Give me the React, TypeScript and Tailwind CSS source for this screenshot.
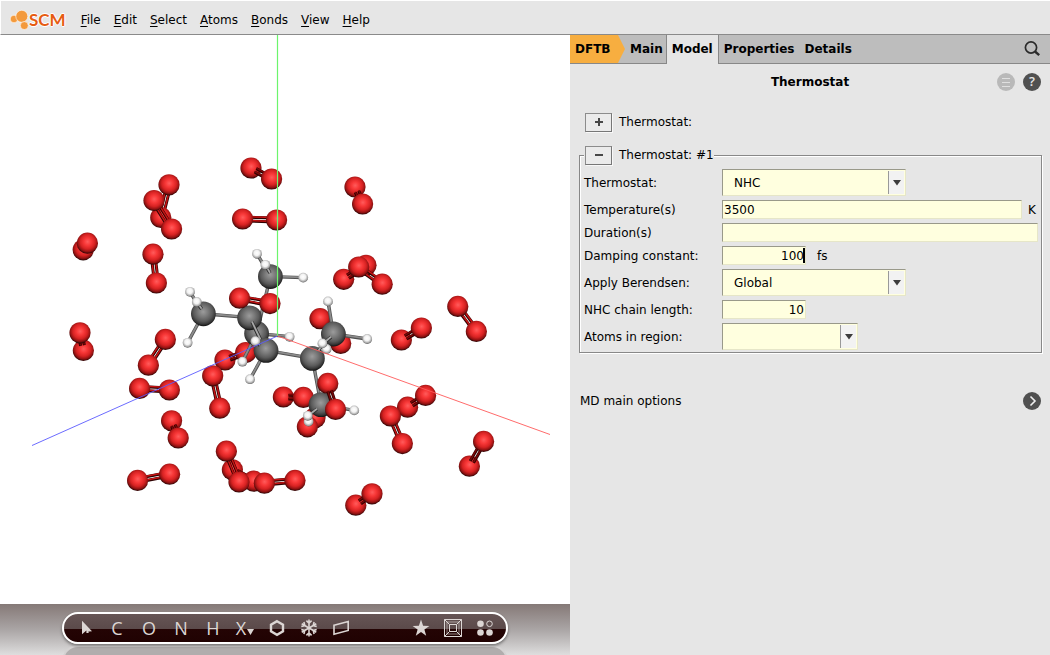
import React from "react";

type Kind = "O" | "C" | "H";
type Bond = [number, number, number, number, number];
type Atom = [Kind, number, number];

interface Group {
  bonds?: Bond[];
  atoms: Atom[];
  fore?: Bond[];
  front?: Atom[];
}

// Two oxygens; in short pairs the bond starts on the face of the first ball and ends behind the second.
function oxygen(x1: number, y1: number, x2: number, y2: number): Group {
  const len = Math.hypot(x2 - x1, y2 - y1);
  if (len > 29) {
    return {
      bonds: [[x1, y1, x2, y2, 2]],
      atoms: [
        ["O", x1, y1],
        ["O", x2, y2],
      ],
    };
  }
  const t = 5 / len;
  return {
    atoms: [["O", x1, y1]],
    fore: len > 12 ? [[x1 + (x2 - x1) * t, y1 + (y2 - y1) * t, x2, y2, 2]] : [],
    front: [["O", x2, y2]],
  };
}

const back: Group[] = [
  oxygen(251, 168, 271.6, 179),
  oxygen(242.6, 219, 276.6, 220),
  oxygen(160.8, 217.5, 169, 184.8),
  oxygen(154, 200.6, 171.6, 229),
  oxygen(83.2, 249.8, 87.4, 243.2),
  oxygen(153, 254.2, 156.4, 283),
  oxygen(83.4, 350.4, 80, 332.8),
  oxygen(165.4, 339.4, 148.4, 365.2),
  oxygen(355, 187, 362.6, 204),
  oxygen(343.7, 279.3, 366, 265.3),
  { bonds: [[358.7, 267, 382.3, 284, 2]], atoms: [["O", 358.7, 267], ["O", 382.2, 284.2]] },
  oxygen(401.4, 340, 421.4, 328),
  oxygen(457.8, 306.4, 476.4, 331.4),
  oxygen(225, 360, 245.7, 352.6),
  oxygen(139.6, 388.4, 169.4, 390),
  oxygen(212.7, 375.8, 219.8, 408.2),
  oxygen(171.6, 420.8, 178.2, 438),
  oxygen(137.6, 480.4, 169.6, 474.2),
  oxygen(232.4, 469.8, 253.7, 481.2),
  oxygen(226.4, 451.2, 239, 482),
  oxygen(295, 480.4, 264.4, 483.2),
  oxygen(355.8, 505.2, 372, 493.8),
  oxygen(407.6, 407.2, 425.6, 395.4),
  oxygen(390.4, 416, 402.4, 443.6),
  oxygen(469.4, 466.2, 483.6, 441.4),
  oxygen(283.4, 397, 303.4, 397.4),
  oxygen(315, 417.7, 307.4, 426.8),
  oxygen(320, 318.7, 340.7, 343.4),
];

const molecule: Group[] = [
  { bonds: [[270.4, 276.6, 256.6, 333.5, 1], [256.6, 333.5, 289.6, 336.6, 1], [256.6, 333.5, 242.4, 361.7, 1]], atoms: [["C", 256.6, 333.5], ["H", 289.6, 336.8], ["H", 242.4, 361.7]] },
  { bonds: [[270.4, 276.6, 257, 253.8, 1], [270.4, 276.6, 303.2, 277.6, 1]], atoms: [["C", 270.4, 276.6], ["H", 257, 253.8], ["H", 303.2, 277.6]], fore: [[270, 273, 265.4, 264.8, 1]], front: [["H", 265.4, 264.8]] },
  { bonds: [[203.4, 313.8, 249.6, 317.6, 1], [203.4, 313.8, 187.6, 342.8, 1], [203.4, 313.8, 190, 291.8, 1]], atoms: [["H", 190, 291.8], ["H", 187.6, 342.8], ["C", 203.4, 313.8]], fore: [[201.6, 309, 196.8, 302, 1]], front: [["H", 196.8, 302]] },
  { bonds: [[249.6, 317.6, 266, 350.4, 1]], atoms: [["C", 249.6, 317.8]], fore: [[252, 322, 262, 343, 1]] },
  oxygen(239.6, 298.2, 270, 303.6),
  { bonds: [[266, 350.4, 312.4, 358.4, 1], [266, 350.4, 250, 379.2, 1]], atoms: [["C", 266, 350.4], ["H", 250, 379.2]], fore: [[260, 345.5, 255.4, 341.2, 1]], front: [["H", 255.4, 341.2]] },
  { bonds: [[333.4, 334, 328, 301.4, 1], [333.4, 334, 367.2, 339, 1]], atoms: [["C", 333.4, 334], ["H", 328, 301.4], ["H", 367.2, 339]] },
  { bonds: [[312.4, 358.4, 321, 404.7, 1]], atoms: [["H", 326.6, 349], ["C", 312.4, 358.4]], fore: [[331, 337, 324, 343, 1], [322.5, 344, 318.5, 351, 1]], front: [["H", 322.4, 343.4]] },
  { bonds: [[321, 404.7, 354.2, 410.4, 1]], atoms: [["C", 321, 404.7], ["H", 354.2, 410.4], ["H", 308.6, 421.6]], fore: [[317, 409, 308, 416, 1]], front: [["H", 307.8, 415.8]] },
  { atoms: [["O", 327.8, 383.4]], fore: [[329.6, 391, 335.6, 409.4, 2]], front: [["O", 335.6, 409.4]] },
];

const radius: Record<Kind, number> = { O: 10.6, C: 12.4, H: 4.9 };

function BondLine({ bond, pale }: { bond: Bond; pale?: boolean }) {
  const [x1, y1, x2, y2, order] = bond;
  if (order === 1) {
    return (
      <g>
        <line x1={x1} y1={y1} x2={x2} y2={y2} stroke={pale ? "#2c2c2c" : "#505050"} strokeWidth={3.4} />
        <line x1={x1} y1={y1 - 0.3} x2={x2} y2={y2 - 0.3} stroke={pale ? "#a8a8a8" : "#8c8c8c"} strokeWidth={1.8} />
      </g>
    );
  }
  const len = Math.hypot(x2 - x1, y2 - y1);
  const nx = (-(y2 - y1) / len) * 1.9;
  const ny = ((x2 - x1) / len) * 1.9;
  return (
    <g>
      {[-1, 1].map((s) => (
        <g key={s}>
          <line x1={x1 + nx * s} y1={y1 + ny * s} x2={x2 + nx * s} y2={y2 + ny * s} stroke="#2e0000" strokeWidth={3} />
          <line x1={x1 + nx * s} y1={y1 + ny * s - 0.5} x2={x2 + nx * s} y2={y2 + ny * s - 0.5} stroke={pale ? "#7a0808" : "#c81414"} strokeWidth={1.5} />
        </g>
      ))}
    </g>
  );
}

function Balls({ atoms }: { atoms: Atom[] }) {
  return (
    <>
      {atoms.map(([kind, x, y], k) => (
        <circle key={k} cx={x} cy={y} r={radius[kind]} fill={`url(#ball-${kind})`} />
      ))}
    </>
  );
}

function Scene() {
  return (
    <svg viewBox="0 35 570 569" className="block h-full w-full" role="img" aria-label="Molecule view">
      <defs>
        <radialGradient id="ball-O" cx="0.51" cy="0.43" r="0.58">
          <stop offset="0" stopColor="#ff5c5c" />
          <stop offset="0.3" stopColor="#f83838" />
          <stop offset="0.6" stopColor="#d62222" />
          <stop offset="0.82" stopColor="#901212" />
          <stop offset="1" stopColor="#180202" />
        </radialGradient>
        <radialGradient id="ball-C" cx="0.49" cy="0.42" r="0.59">
          <stop offset="0" stopColor="#9c9c9c" />
          <stop offset="0.35" stopColor="#7a7a7a" />
          <stop offset="0.65" stopColor="#5a5a5a" />
          <stop offset="0.84" stopColor="#383838" />
          <stop offset="1" stopColor="#0c0c0c" />
        </radialGradient>
        <radialGradient id="ball-H" cx="0.48" cy="0.42" r="0.6">
          <stop offset="0" stopColor="#ffffff" />
          <stop offset="0.45" stopColor="#f2f2f2" />
          <stop offset="0.8" stopColor="#a4a4a4" />
          <stop offset="1" stopColor="#484848" />
        </radialGradient>
      </defs>
      {[...back, ...molecule].map((g, i) => (
        <g key={i}>
          {g.bonds?.map((b, k) => <BondLine key={k} bond={b} />)}
          <Balls atoms={g.atoms} />
          {g.fore?.map((b, k) => <BondLine key={k} bond={b} pale />)}
          {g.front && <Balls atoms={g.front} />}
        </g>
      ))}
      <path d="M277.5 35V336" stroke="#6cf56c" strokeWidth="1.2" />
      <path d="M277.5 336L32 445.5" stroke="#5a5aff" strokeWidth="0.9" />
      <path d="M277.5 336L550 434.5" stroke="#ff5a5a" strokeWidth="0.9" />
    </svg>
  );
}

function Logo() {
  return (
    <div className="flex items-center">
      <svg width="20" height="24" viewBox="0 0 20 24" stroke="#fff" strokeWidth="0.6" aria-hidden="true">
        <circle cx="5" cy="11" r="3.8" fill="#f39a3c" />
        <circle cx="12.8" cy="8.3" r="6" fill="#f39a3c" />
        <circle cx="15.3" cy="17.6" r="4" fill="#f39a3c" />
      </svg>
      <span className="font-['Lato'] text-[17px] leading-6 font-bold text-[#e65c12] [text-shadow:1px_0_#fff,-1px_0_#fff,0_1px_#fff,0_-1px_#fff]">SCM</span>
    </div>
  );
}

const menus = ["File", "Edit", "Select", "Atoms", "Bonds", "View", "Help"];

function MenuBar() {
  return (
    <header className="flex h-[35px] items-center border-t border-l border-b border-t-white border-l-white border-b-[#8a8a8a] pt-1 pl-2">
      <Logo />
      <nav className="ml-[15px] flex gap-[13px]">
        {menus.map((m) => (
          <button key={m} type="button">
            <span className="underline underline-offset-2">{m[0]}</span>
            {m.slice(1)}
          </button>
        ))}
      </nav>
    </header>
  );
}

function Tool({ label, children }: { label: string; children: React.ReactNode }) {
  return (
    <button type="button" aria-label={label} className="flex h-7 w-8 items-center justify-center">
      {children}
    </button>
  );
}

function ToolBar() {
  return (
    <div className="flex h-[51px] flex-col items-center overflow-hidden bg-linear-to-b from-[#857977] via-[#aaa5a5] to-[#dedede] pt-2">
      <div className="z-10 flex h-8 w-[446px] shrink-0 items-center justify-between rounded-full border-2 border-white bg-[linear-gradient(to_bottom,#665555_0,#5b4a4a_52%,#240404_54%,#200202_100%)] px-[5px] font-['Open_Sans'] text-lg font-medium text-[#dcd6d4] shadow-[0_2px_3px_#0006]">
        <div className="flex">
          <Tool label="Pointer">
            <svg width="14" height="16" viewBox="0 0 14 16" fill="currentColor"><path d="M4 .8L14 11.2L11.4 11.6L10.6 11.2V13L8.4 13V10.4L4 14.2Z" /></svg>
          </Tool>
          <Tool label="Carbon">C</Tool>
          <Tool label="Oxygen">O</Tool>
          <Tool label="Nitrogen">N</Tool>
          <Tool label="Hydrogen">H</Tool>
          <Tool label="Other element">
            <span>X</span>
            <svg width="7" height="6" viewBox="0 0 7 6" fill="currentColor" className="mt-2 ml-px"><path d="M0 0H7L3.5 6Z" /></svg>
          </Tool>
          <Tool label="Ring">
            <svg width="18" height="18" viewBox="0 0 18 18" fill="none" stroke="currentColor" strokeWidth="2.4"><path d="M9 2.2L15 5.6V12.4L9 15.8L3 12.4V5.6Z" /></svg>
          </Tool>
          <Tool label="Crystal">
            <svg width="18" height="18" viewBox="-9 -9 18 18" fill="none" stroke="currentColor" strokeWidth="1.6">
              {[0, 60, 120, 180, 240, 300].map((a) => (
                <path key={a} transform={`rotate(${a})`} d="M0 0V-8.4M-2.6 -7.4L0 -4.8L2.6 -7.4" />
              ))}
            </svg>
          </Tool>
          <Tool label="Plane">
            <svg width="18" height="16" viewBox="0 0 18 16" fill="none" stroke="currentColor" strokeWidth="1.6"><path d="M2 5.2L16.2 1.5V10.5L2 14.2Z" /></svg>
          </Tool>
        </div>
        <div className="flex">
          <Tool label="Favorites">
            <svg width="18" height="18" viewBox="0 0 18 18" fill="currentColor"><path d="M9 .6L11.1 6.7L17.4 6.9L12.4 10.6L14.2 16.8L9 13.1L3.8 16.8L5.6 10.6L.6 6.9L6.9 6.7Z" /></svg>
          </Tool>
          <Tool label="Perspective">
            <svg width="18" height="18" viewBox="0 0 18 18" fill="none" stroke="currentColor"><path d="M.5 .5H17.5V17.5H.5ZM5.5 5.5H12.5V12.5H5.5ZM.5 .5L5.5 5.5M17.5 .5L12.5 5.5M.5 17.5L5.5 12.5M17.5 17.5L12.5 12.5" /><path d="M3 3H15V15H3Z" strokeOpacity="0.6" /></svg>
          </Tool>
          <Tool label="Atom display">
            <svg width="18" height="18" viewBox="0 0 18 18" fill="currentColor">
              <circle cx="4.5" cy="4.8" r="3.3" />
              <circle cx="13.5" cy="4.8" r="2.8" fill="none" stroke="currentColor" />
              <circle cx="4.5" cy="13.5" r="3.3" />
              <circle cx="13.5" cy="13.5" r="3.3" />
            </svg>
          </Tool>
        </div>
      </div>
      <div className="mt-px h-8 w-[446px] shrink-0 rounded-full border-2 border-[#d4d2d2] bg-[#b0adad]" />
    </div>
  );
}

function Tabs() {
  return (
    <div role="tablist" className="flex h-[29px] bg-[linear-gradient(to_bottom,#bdbdbd_28px,#888_28px)] font-bold">
      <button type="button" role="tab" className="mb-px w-[55px] bg-[#f7ae40] pb-px pl-[5px] text-left [clip-path:polygon(0_0,48px_0,100%_50%,48px_100%,0_100%)]">DFTB</button>
      <button type="button" role="tab" className="border-r border-[#888] pr-[3px] pb-[2px] pl-[5px]">Main</button>
      <button type="button" role="tab" aria-selected="true" className="border-r border-[#888] bg-[#e6e6e6] px-[5px] pb-[2px]">Model</button>
      <button type="button" role="tab" className="px-[5px] pb-[2px]">Properties</button>
      <button type="button" role="tab" className="px-[5px] pb-[2px]">Details</button>
      <button type="button" aria-label="Search" className="mr-[9px] mb-px ml-auto">
        <svg width="18" height="18" viewBox="0 0 18 18" fill="none" stroke="#2b2b2b"><circle cx="8" cy="7.5" r="5.6" strokeWidth="1.7" /><path d="M12 11.5L16.2 15.2" strokeWidth="2.4" /></svg>
      </button>
    </div>
  );
}

function SquareButton({ label, plus }: { label: string; plus?: boolean }) {
  return (
    <button type="button" aria-label={label} className="flex h-[19px] w-[27px] items-center justify-center border border-t-[#8c8c8c] border-r-[#777] border-b-[#777] border-l-[#8c8c8c] bg-[#ebebeb] shadow-[1px_1px_0_#f8f8f8]">
      <svg width="8" height="8" viewBox="0 0 8 8" stroke="#484848" strokeWidth="2"><path d={plus ? "M0 4H8M4 0V8" : "M0 4H8"} /></svg>
    </button>
  );
}

function Row({ id, label, children }: { id: string; label: string; children: React.ReactNode }) {
  return (
    <div className="flex items-center">
      <label htmlFor={id} className="w-[138px] shrink-0">{label}</label>
      {children}
    </div>
  );
}

const field = "border border-t-[#99998a] border-l-[#99998a] border-r-[#e6e6c8] border-b-[#e6e6c8] bg-[#ffffdf] outline-none";

function Combo({ id, value, width }: { id: string; value: string; width: string }) {
  return (
    <div className={`grid h-[27px] ${width}`}>
      <select id={id} defaultValue={value} className={`${field} col-start-1 row-start-1 w-full appearance-none pl-[11px]`}>
        <option value={value}>{value}</option>
      </select>
      <span className="pointer-events-none col-start-1 row-start-1 my-[2px] mr-[2px] flex w-4 items-center justify-center justify-self-end border-l border-[#999] bg-[#f2f2f2]">
        <svg width="8" height="6" viewBox="0 0 8 6" fill="#3c3c3c"><path d="M0 0H8L4 5.5Z" /></svg>
      </span>
    </div>
  );
}

function Panel() {
  return (
    <section className="flex flex-col">
      <Tabs />
      <div className="mt-[9px] grid grid-cols-[1fr_auto_1fr] items-center px-[9px]">
        <h1 className="col-start-2 font-bold">Thermostat</h1>
        <div className="flex justify-end gap-2">
          <button type="button" aria-label="Options">
            <svg width="18" height="18" viewBox="0 0 18 18"><circle cx="9" cy="9" r="9" fill="#b9b9b9" /><path d="M5 5.5H13M5 9.5H13M5 13.5H13" stroke="#e0e0e0" /></svg>
          </button>
          <button type="button" aria-label="Help" className="flex size-[18px] items-center justify-center rounded-full bg-[#505050] font-['Open_Sans'] text-[13px] font-semibold text-[#e6e6e6]">?</button>
        </div>
      </div>
      <div className="mt-[21px] flex h-5 items-center gap-[7px] pl-[15px]">
        <SquareButton label="Add thermostat" plus />
        <span>Thermostat:</span>
      </div>
      <fieldset className="mr-2 ml-[9px] mt-[13px] border border-[#888] pr-[3px] pb-[2px] pl-1 shadow-[1px_1px_0_#fff,inset_1px_1px_0_#fff]">
        <legend className="flex h-5 items-center gap-[7px] bg-[#e6e6e6] pl-px">
          <SquareButton label="Remove thermostat" />
          <span>Thermostat: #1</span>
        </legend>
        <div className="mt-1 flex flex-col gap-1">
          <Row id="kind" label="Thermostat:"><Combo id="kind" value="NHC" width="w-[184px]" /></Row>
          <Row id="temp" label="Temperature(s)">
            <input id="temp" defaultValue="3500" className={`${field} h-[19px] min-w-0 flex-1 pl-px`} />
            <span className="w-4 pl-[6px]">K</span>
          </Row>
          <Row id="duration" label="Duration(s)">
            <input id="duration" defaultValue="" className={`${field} h-[19px] min-w-0 flex-1 pl-px`} />
          </Row>
          <Row id="damping" label="Damping constant:">
            <div className="relative flex">
              <input id="damping" defaultValue="100" className={`${field} h-[19px] w-[84px] pr-px text-right`} />
              <span className="absolute top-[2px] right-px h-[15px] w-[2px] bg-black" />
            </div>
            <span className="ml-[11px]">fs</span>
          </Row>
          <Row id="berendsen" label="Apply Berendsen:"><Combo id="berendsen" value="Global" width="w-[184px]" /></Row>
          <Row id="chain" label="NHC chain length:">
            <input id="chain" defaultValue="10" className={`${field} h-[19px] w-[84px] pr-px text-right`} />
          </Row>
          <Row id="region" label="Atoms in region:"><Combo id="region" value="" width="w-[136px]" /></Row>
        </div>
      </fieldset>
      <div className="mt-[39px] flex items-center justify-between pr-[9px] pl-[10px]">
        <span>MD main options</span>
        <button type="button" aria-label="MD main options">
          <svg width="18" height="18" viewBox="0 0 18 18"><circle cx="9" cy="9" r="9" fill="#505050" /><path d="M7.5 4.5L12 9L7.5 13.5" fill="none" stroke="#f0f0f0" strokeWidth="1.6" /></svg>
        </button>
      </div>
    </section>
  );
}

export default function App() {
  return (
    <div className="flex min-h-screen flex-col bg-[#e6e6e6] font-['DejaVu_Sans',sans-serif] text-xs text-black">
      <MenuBar />
      <main className="grid flex-1 grid-cols-[57fr_48fr]">
        <section className="flex min-w-0 flex-col bg-white">
          <div className="min-h-0 flex-1"><Scene /></div>
          <ToolBar />
        </section>
        <Panel />
      </main>
    </div>
  );
}
